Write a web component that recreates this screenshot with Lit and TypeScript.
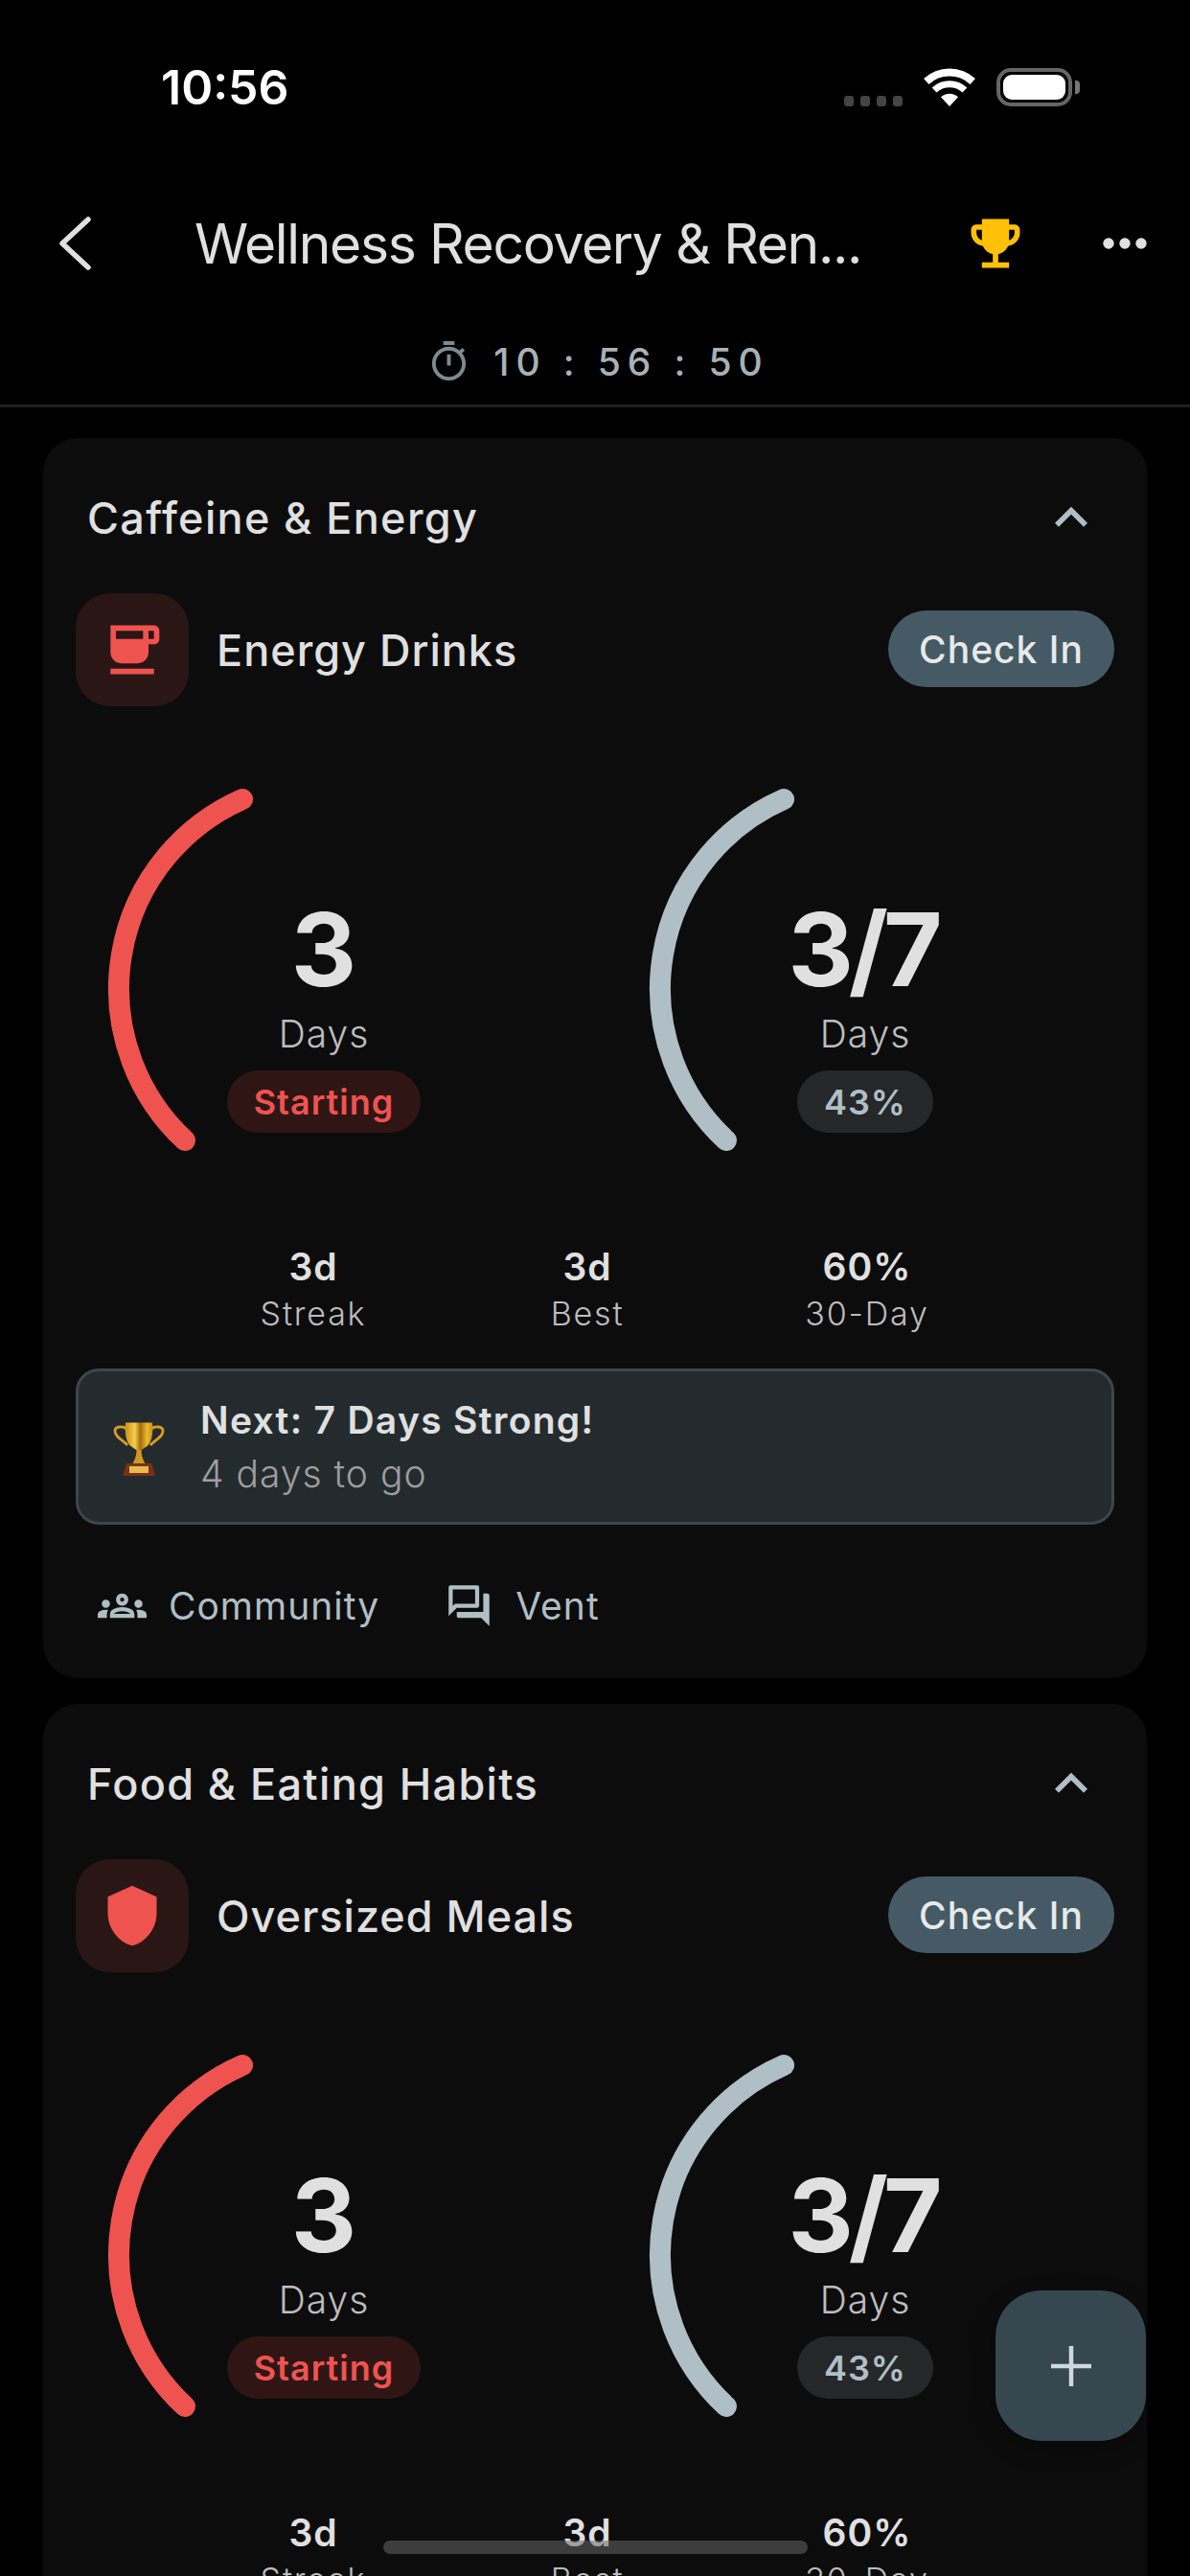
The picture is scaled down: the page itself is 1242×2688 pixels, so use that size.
import { LitElement, html, css, svg } from 'lit';
import { customElement, property } from 'lit/decorators.js';

interface Habit {
  category: string;
  name: string;
  icon: 'cup' | 'shield';
}

const HABITS: Habit[] = [
  { category: 'Caffeine & Energy', name: 'Energy Drinks', icon: 'cup' },
  { category: 'Food & Eating Habits', name: 'Oversized Meals', icon: 'shield' },
];

const ICONS = {
  cup: svg`<path fill-rule="evenodd" d="M20 3H4v10c0 2.21 1.79 4 4 4h6c2.21 0 4-1.79 4-4v-3h2c1.11 0 2-.9 2-2V5c0-1.11-.89-2-2-2zM20 8h-2V5h2zM6 5h10v3H6zM4 19h16v2H4z"/>`,
  shield: svg`<path d="M12 1 3 5v6c0 5.55 3.84 10.74 9 12 5.16-1.26 9-6.45 9-12V5l-9-4z"/>`,
};

@customElement('habit-card')
export class HabitCard extends LitElement {
  @property({ type: Object }) habit!: Habit;

  static styles = css`
    :host {
      display: block;
    }

    .card {
      background: #0c0c0d;
      border-radius: 36px;
      padding: 40px 34px 34px;
    }

    .header {
      display: flex;
      align-items: center;
      justify-content: space-between;
      height: 86px;
      padding: 0 11px 0 12px;
      margin-bottom: 36px;
    }

    .header-title {
      font-size: 45px;
      font-weight: 500;
      letter-spacing: 1.35px;
      color: #e0e0e0;
    }

    .chevron {
      width: 68px;
      height: 68px;
      fill: #b0bec5;
    }

    .habit-row {
      display: flex;
      align-items: center;
      height: 118px;
    }

    .habit-icon {
      display: flex;
      align-items: center;
      justify-content: center;
      width: 118px;
      height: 118px;
      border-radius: 36px;
      background: #2a1615;
    }

    .habit-icon svg {
      width: 68px;
      height: 68px;
      fill: #ef5350;
    }

    .habit-name {
      flex: 1;
      margin-left: 29px;
      font-size: 45px;
      font-weight: 500;
      letter-spacing: 1px;
      color: #e0e0e0;
    }

    .check-in {
      display: flex;
      align-items: center;
      justify-content: center;
      width: 236px;
      height: 80px;
      margin-top: -2px;
      border-radius: 40px;
      background: #455a64;
      color: #e6e9ea;
      font-size: 39px;
      font-weight: 500;
      letter-spacing: 1px;
    }

    .gauges {
      display: flex;
      gap: 111px;
      padding: 0 32px;
      margin-top: 66px;
    }

    .gauge {
      position: relative;
      display: flex;
      flex-direction: column;
      align-items: center;
      box-sizing: border-box;
      width: 454px;
      height: 454px;
      padding-top: 135px;
    }

    .gauge svg {
      position: absolute;
      inset: 0;
      width: 454px;
      height: 454px;
      fill: none;
      stroke-width: 22;
      stroke-linecap: round;
    }

    .gauge-value {
      padding-right: 5px;
      font-size: 106px;
      line-height: 106px;
      font-weight: 700;
      letter-spacing: -5px;
      color: #e0e0e0;
    }

    .gauge-unit {
      margin-top: 11px;
      font-size: 39px;
      line-height: 48px;
      font-weight: 300;
      letter-spacing: 1px;
      color: #bdbdbd;
    }

    .pill {
      display: flex;
      align-items: center;
      height: 65px;
      margin-top: 14px;
      padding: 0 28px;
      border-radius: 33px;
      font-size: 36px;
      font-weight: 600;
      letter-spacing: 1px;
    }

    .pill.red {
      background: #2f1615;
      color: #ef5350;
    }

    .pill.grey {
      background: #252729;
      color: #b0bec5;
    }

    .stats {
      display: grid;
      grid-template-columns: 286px 286px 298px;
      padding-left: 105px;
      margin-top: 41px;
    }

    .stat {
      display: flex;
      flex-direction: column;
      align-items: center;
    }

    .stat-value {
      font-size: 39px;
      line-height: 48px;
      font-weight: 600;
      letter-spacing: 1px;
      color: #e0e0e0;
    }

    .stat-label {
      margin-top: 3px;
      font-size: 34px;
      line-height: 44px;
      font-weight: 300;
      letter-spacing: 1.8px;
      color: #bdbdbd;
    }

    .next {
      display: flex;
      align-items: center;
      gap: 36px;
      box-sizing: border-box;
      height: 163px;
      margin-top: 35px;
      padding-left: 35px;
      border: 3px solid #3c464b;
      border-radius: 24px;
      background: #242b2f;
    }

    .next svg {
      width: 56px;
      height: 58px;
      flex-shrink: 0;
      margin-top: 4px;
    }

    .next-title {
      font-size: 39px;
      line-height: 56px;
      font-weight: 600;
      letter-spacing: 1.3px;
      color: #e0e0e0;
    }

    .next-sub {
      font-size: 39px;
      line-height: 56px;
      font-weight: 300;
      letter-spacing: 1px;
      color: #9e9e9e;
    }

    .actions {
      display: flex;
      gap: 68px;
      height: 84px;
      margin-top: 42px;
      padding-left: 23px;
    }

    .action {
      display: flex;
      align-items: center;
      gap: 23px;
      font-size: 39px;
      font-weight: 400;
      letter-spacing: 1px;
      color: #b0bec5;
    }

    .action svg {
      width: 51px;
      height: 51px;
      fill: #b0bec5;
    }
  `;

  private renderGauge(color: string, value: string, pill: string, pillClass: string) {
    return html`
      <div class="gauge">
        <svg viewBox="0 0 454 454">
          <path d="M82 387A216 216 0 0 1 142 31" stroke=${color}></path>
        </svg>
        <div class="gauge-value">${value}</div>
        <div class="gauge-unit">Days</div>
        <div class="pill ${pillClass}">${pill}</div>
      </div>
    `;
  }

  private renderStat(value: string, label: string) {
    return html`
      <div class="stat">
        <div class="stat-value">${value}</div>
        <div class="stat-label">${label}</div>
      </div>
    `;
  }

  render() {
    const { category, name, icon } = this.habit;
    return html`
      <div class="card">
        <div class="header">
          <span class="header-title">${category}</span>
          <svg class="chevron" viewBox="0 0 24 24">
            <path d="M12 8l-6 6 1.41 1.41L12 10.83l4.59 4.58L18 14z"></path>
          </svg>
        </div>
        <div class="habit-row">
          <div class="habit-icon">
            <svg viewBox="0 0 24 24">${ICONS[icon]}</svg>
          </div>
          <span class="habit-name">${name}</span>
          <div class="check-in">Check In</div>
        </div>
        <div class="gauges">
          ${this.renderGauge('#ef5350', '3', 'Starting', 'red')}
          ${this.renderGauge('#b0bec5', '3/7', '43%', 'grey')}
        </div>
        <div class="stats">
          ${this.renderStat('3d', 'Streak')}
          ${this.renderStat('3d', 'Best')}
          ${this.renderStat('60%', '30-Day')}
        </div>
        <div class="next">
          <svg viewBox="12 8 56 58">
            <defs>
              <linearGradient id="gold" x1="0" x2="1" y1="0" y2="0">
                <stop offset="0" stop-color="#c98f14"></stop>
                <stop offset="0.35" stop-color="#f7cf4a"></stop>
                <stop offset="0.55" stop-color="#a06c0c"></stop>
                <stop offset="0.8" stop-color="#eeb92c"></stop>
                <stop offset="1" stop-color="#c78f14"></stop>
              </linearGradient>
            </defs>
            <path d="M27 16c-3-3-12-3-12 2 0 7 8 9 13 15M53 16c3-3 12-3 12 2 0 7-8 9-13 15" fill="none" stroke="#d69f20" stroke-width="2.8"></path>
            <path d="M26 9.5h28c1 10 0 20-6 25-3 2-5 3-6 4h-4c-1-1-3-2-6-4-6-5-7-15-6-25z" fill="url(#gold)"></path>
            <path d="M37.5 38h5c0 5 1 9 4 14h-13c3-5 4-9 4-14z" fill="#d09a20"></path>
            <path d="M27 52h26l4 13H23z" fill="#7a3210"></path>
            <rect x="30" y="55" width="20" height="7" fill="#e8bb52"></rect>
          </svg>
          <div>
            <div class="next-title">Next: 7 Days Strong!</div>
            <div class="next-sub">4 days to go</div>
          </div>
        </div>
        <div class="actions">
          <div class="action">
            <svg viewBox="0 0 24 24">
              <path d="M4 13c1.1 0 2-.9 2-2s-.9-2-2-2-2 .9-2 2 .9 2 2 2zm1.13 1.1C4.76 14.04 4.39 14 4 14c-.99 0-1.93.21-2.78.58C.48 14.9 0 15.62 0 16.43V18h4.5v-1.61c0-.83.23-1.61.63-2.29zM20 13c1.1 0 2-.9 2-2s-.9-2-2-2-2 .9-2 2 .9 2 2 2zm4 3.43c0-.81-.48-1.53-1.22-1.85C21.93 14.21 20.99 14 20 14c-.39 0-.76.04-1.13.1.4.68.63 1.46.63 2.29V18H24v-1.57zm-7.76-2.78C15.07 13.13 13.63 12.75 12 12.75s-3.07.39-4.24.9C6.68 14.13 6 15.21 6 16.39V18h12v-1.61c0-1.18-.68-2.26-1.76-2.74zM8.07 16c.09-.23.13-.39.91-.69.97-.38 1.99-.56 3.02-.56s2.05.18 3.02.56c.77.3.81.46.91.69H8.07zM12 8c.55 0 1 .45 1 1s-.45 1-1 1-1-.45-1-1 .45-1 1-1m0-2c-1.66 0-3 1.34-3 3s1.34 3 3 3 3-1.34 3-3-1.34-3-3-3z"></path>
            </svg>
            Community
          </div>
          <div class="action">
            <svg viewBox="0 0 24 24">
              <path d="M15 4v7H5.17L4 12.17V4h11m1-2H3c-.55 0-1 .45-1 1v14l4-4h10c.55 0 1-.45 1-1V3c0-.55-.45-1-1-1zm5 4h-2v9H6v2c0 .55.45 1 1 1h11l4 4V7c0-.55-.45-1-1-1z"></path>
            </svg>
            Vent
          </div>
        </div>
      </div>
    `;
  }
}

@customElement('app-root')
export class AppRoot extends LitElement {
  static styles = css`
    :host {
      display: block;
      font-family: Inter, 'Liberation Sans', sans-serif;
    }

    .screen {
      position: relative;
      display: flex;
      flex-direction: column;
      width: 1242px;
      height: 2688px;
      overflow: hidden;
      background: #000;
    }

    .status {
      display: flex;
      align-items: center;
      justify-content: space-between;
      box-sizing: border-box;
      height: 180px;
      padding: 2px 115px 0 168px;
      flex-shrink: 0;
    }

    .clock {
      font-size: 50px;
      font-weight: 600;
      color: #fff;
    }

    .status-icons {
      display: flex;
      align-items: flex-end;
      gap: 22px;
    }

    .signal {
      display: flex;
      gap: 7px;
    }

    .signal span {
      width: 10px;
      height: 11px;
      border-radius: 3px;
      background: #444;
    }

    .wifi {
      width: 54px;
      height: 40px;
      fill: none;
      stroke: #fff;
    }

    .battery {
      display: flex;
      align-items: center;
      gap: 3px;
    }

    .battery-body {
      box-sizing: border-box;
      width: 79px;
      height: 40px;
      padding: 3px;
      border: 4px solid #666;
      border-radius: 15px;
    }

    .battery-body div {
      height: 100%;
      border-radius: 9px;
      background: #fff;
    }

    .battery-cap {
      width: 5px;
      height: 14px;
      border-radius: 0 4px 4px 0;
      background: #777;
    }

    .nav {
      display: flex;
      align-items: center;
      height: 148px;
      flex-shrink: 0;
    }

    .back {
      width: 36px;
      height: 56px;
      margin-left: 61px;
      fill: none;
      stroke: #e0e0e0;
      stroke-width: 5.5;
      stroke-linecap: round;
      stroke-linejoin: round;
    }

    .nav-title {
      flex: 1;
      margin-left: 106px;
      font-size: 57px;
      font-weight: 400;
      letter-spacing: -1.35px;
      color: #e0e0e0;
      white-space: nowrap;
    }

    .nav-trophy {
      width: 68px;
      height: 68px;
      fill: #ffc107;
    }

    .nav-more {
      width: 68px;
      height: 68px;
      margin: 0 34px 0 67px;
      fill: #e0e0e0;
    }

    .timer {
      display: flex;
      align-items: center;
      justify-content: center;
      gap: 23px;
      box-sizing: border-box;
      height: 97px;
      padding: 5px 0 0 6px;
      border-bottom: 3px solid #1f1f1f;
      flex-shrink: 0;
    }

    .timer svg {
      width: 47px;
      height: 47px;
      fill: #7d8a90;
    }

    .timer span {
      font-size: 39px;
      font-weight: 500;
      letter-spacing: 6.9px;
      color: #a6b2b8;
    }

    .list {
      display: flex;
      flex-direction: column;
      gap: 27px;
      padding: 32px 45px 0;
    }

    .fab {
      position: absolute;
      left: 1039px;
      top: 2390px;
      display: flex;
      align-items: center;
      justify-content: center;
      width: 157px;
      height: 157px;
      border-radius: 48px;
      background: #37474f;
      box-shadow: 0 8px 24px rgba(0, 0, 0, 0.3);
    }

    .fab svg {
      width: 42px;
      height: 42px;
      stroke: #cfd8dc;
      stroke-width: 4.5;
    }

    .home {
      position: absolute;
      left: 400px;
      top: 2651px;
      width: 443px;
      height: 14px;
      border-radius: 7px;
      background: rgba(104, 104, 104, 0.54);
    }
  `;

  render() {
    return html`
      <div class="screen">
        <div class="status">
          <span class="clock">10:56</span>
          <div class="status-icons">
            <div class="signal"><span></span><span></span><span></span><span></span></div>
            <svg class="wifi" viewBox="0 0 54 40">
              <path d="M2.8 14A35.5 35.5 0 0 1 51.2 14" stroke-width="8"></path>
              <path d="M11.1 23A23.3 23.3 0 0 1 42.9 23" stroke-width="7"></path>
              <path d="M27 40 18 30.3A13.3 13.3 0 0 1 36 30.3Z" fill="#fff" stroke="none"></path>
            </svg>
            <div class="battery">
              <div class="battery-body"><div></div></div>
              <div class="battery-cap"></div>
            </div>
          </div>
        </div>
        <div class="nav">
          <svg class="back" viewBox="0 0 36 56">
            <path d="M31 3 4 28l27 25"></path>
          </svg>
          <span class="nav-title">Wellness Recovery &amp; Ren...</span>
          <svg class="nav-trophy" viewBox="0 0 24 24">
            <path d="M19 5h-2V3H7v2H5c-1.1 0-2 .9-2 2v1c0 2.55 1.92 4.63 4.39 4.94.63 1.5 1.98 2.63 3.61 2.96V19H7v2h10v-2h-4v-3.1c1.63-.33 2.98-1.46 3.61-2.96C19.08 12.63 21 10.55 21 8V7c0-1.1-.9-2-2-2zM5 8V7h2v3.82C5.84 10.4 5 9.3 5 8zm14 0c0 1.3-.84 2.4-2 2.82V7h2v1z"></path>
          </svg>
          <svg class="nav-more" viewBox="0 0 24 24">
            <circle cx="6" cy="12" r="2"></circle>
            <circle cx="12" cy="12" r="2"></circle>
            <circle cx="18" cy="12" r="2"></circle>
          </svg>
        </div>
        <div class="timer">
          <svg viewBox="0 0 24 24">
            <path d="M9 1h6v2H9zM19.03 7.39l1.42-1.42c-.43-.51-.9-.99-1.41-1.41l-1.42 1.42C16.07 4.74 14.12 4 12 4c-4.97 0-9 4.03-9 9s4.02 9 9 9 9-4.03 9-9c0-2.12-.74-4.07-1.97-5.61zM12 20c-3.87 0-7-3.13-7-7s3.13-7 7-7 7 3.13 7 7-3.13 7-7 7zM11 8h2v6h-2z"></path>
          </svg>
          <span>10 : 56 : 50</span>
        </div>
        <div class="list">
          ${HABITS.map((habit) => html`<habit-card .habit=${habit}></habit-card>`)}
        </div>
        <div class="fab">
          <svg viewBox="0 0 42 42"><path d="M21 0v42M0 21h42"></path></svg>
        </div>
        <div class="home"></div>
      </div>
    `;
  }
}
